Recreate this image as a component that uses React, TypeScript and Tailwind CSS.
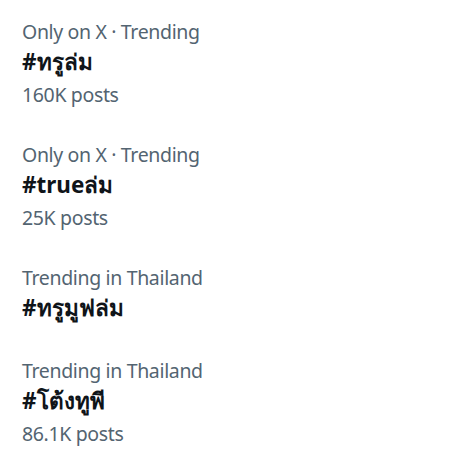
import React from "react";

const trends = [
  { cat: "Only on X · Trending", topic: "#ทรูล่ม", posts: "160K posts" },
  { cat: "Only on X · Trending", topic: "#trueล่ม", posts: "25K posts" },
  { cat: "Trending in Thailand", topic: "#ทรูมูฟล่ม", posts: "" },
  { cat: "Trending in Thailand", topic: "#โต้งทูพี", posts: "86.1K posts" },
];

export default function App() {
  return (
    <div
      className="w-[457px] h-[462px] bg-white overflow-hidden"
      style={{ fontFamily: '"Noto Sans", "Liberation Sans", sans-serif' }}
    >
      {trends.map((t, i) => (
        <div key={i} className="pl-[22px] pr-[24px] pt-[20px] pb-[16px] flex flex-col">
          <div className="text-[19.5px] leading-[24px] tracking-[-0.35px] text-[#536471]">{t.cat}</div>
          <div className="mt-[3px] text-[22.5px] leading-[30px] font-bold text-[#0f1419]">{t.topic}</div>
          {t.posts && (
            <div className="mt-[6px] text-[19.5px] leading-[24px] tracking-[-0.35px] text-[#536471]">{t.posts}</div>
          )}
        </div>
      ))}
    </div>
  );
}
